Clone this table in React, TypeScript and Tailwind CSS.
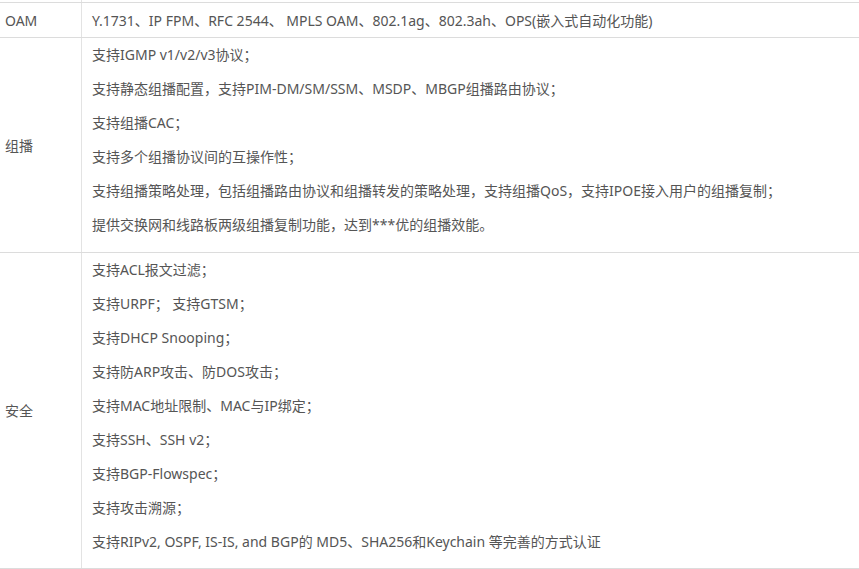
const groupItems = [
  "支持IGMP v1/v2/v3协议；",
  "支持静态组播配置，支持PIM-DM/SM/SSM、MSDP、MBGP组播路由协议；",
  "支持组播CAC；",
  "支持多个组播协议间的互操作性；",
  "支持组播策略处理，包括组播路由协议和组播转发的策略处理，支持组播QoS，支持IPOE接入用户的组播复制；",
  "提供交换网和线路板两级组播复制功能，达到***优的组播效能。",
];

const securityItems = [
  "支持ACL报文过滤；",
  "支持URPF； 支持GTSM；",
  "支持DHCP Snooping；",
  "支持防ARP攻击、防DOS攻击；",
  "支持MAC地址限制、MAC与IP绑定；",
  "支持SSH、SSH v2；",
  "支持BGP-Flowspec；",
  "支持攻击溯源；",
  "支持RIPv2, OSPF, IS-IS, and BGP的 MD5、SHA256和Keychain 等完善的方式认证",
];

function Row({ label, children, className = "" }: { label: string; children: React.ReactNode; className?: string }) {
  return (
    <div className={`flex border-b border-[#dcdcdc] ${className}`}>
      <div className="w-[82px] shrink-0 border-r border-[#e3e3e3] flex items-center pl-[5px] text-[14px]">
        {label}
      </div>
      <div className="flex-1">{children}</div>
    </div>
  );
}

function ItemList({ items, last = "pb-[4px]" }: { items: string[]; last?: string }) {
  return (
    <div className={`pt-[6px] pl-[10px] ${last}`}>
      {items.map((t) => (
        <p key={t} className="text-[14px] leading-[22px] mb-[12px] whitespace-nowrap">
          {t}
        </p>
      ))}
    </div>
  );
}

export default function App() {
  return (
    <div
      className="w-[859px] h-[569px] overflow-hidden bg-white text-[#555]"
      style={{ fontFamily: '"Noto Sans", "Noto Sans CJK SC", sans-serif' }}
    >
      <Row label="" className="h-[3px]">
        <div />
      </Row>
      <Row label="OAM" className="h-[35px]">
        <div className="h-full flex items-center pl-[10px] text-[14px] whitespace-nowrap">
          Y.1731、IP FPM、RFC 2544、 MPLS OAM、802.1ag、802.3ah、OPS(嵌入式自动化功能)
        </div>
      </Row>
      <Row label="组播">
        <ItemList items={groupItems} />
      </Row>
      <Row label="安全">
        <ItemList items={securityItems} last="pb-[3px]" />
      </Row>
    </div>
  );
}
